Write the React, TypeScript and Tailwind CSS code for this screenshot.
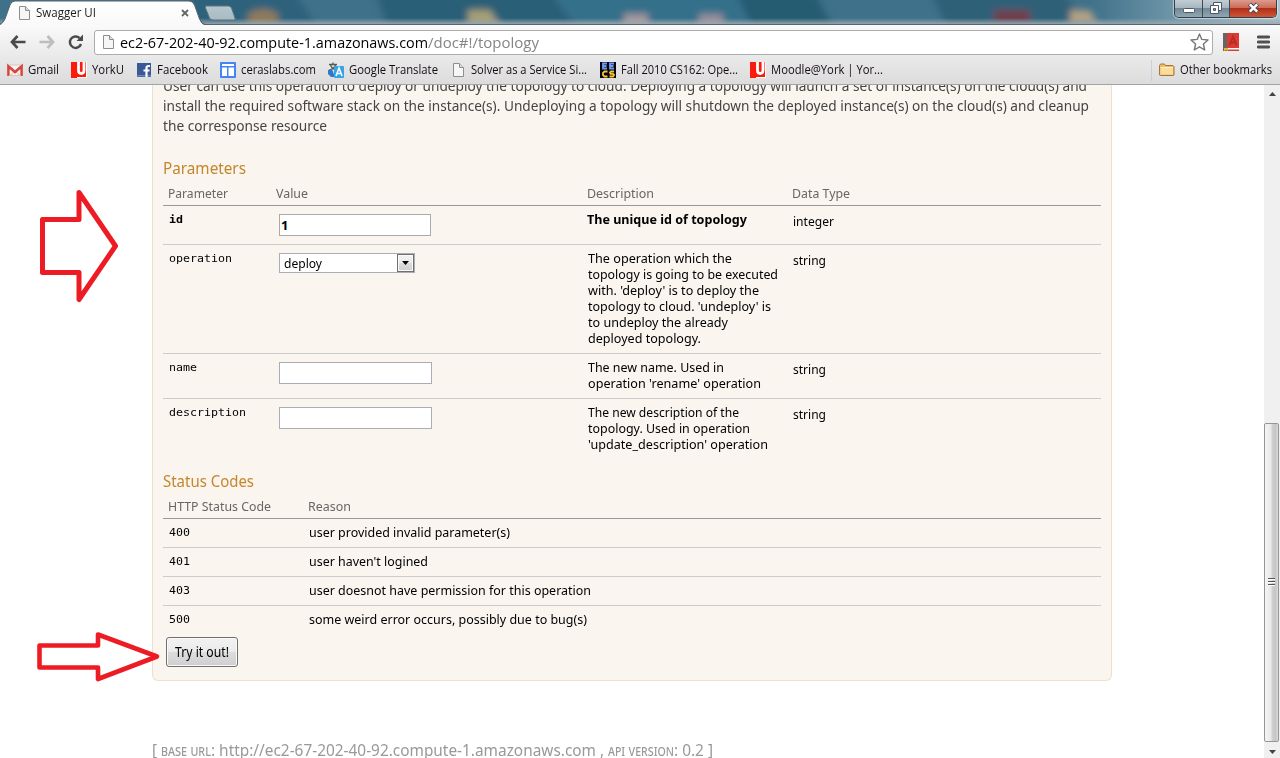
import { useLayoutEffect, useRef, useState } from 'react';
import type { ReactNode } from 'react';

/* One line of text, condensed or widened so that it fills a given width. */
function Line({ w, text, className = '' }: { w: number; text: string; className?: string }) {
  const ref = useRef<HTMLSpanElement>(null);
  const [natural, setNatural] = useState(w);
  useLayoutEffect(() => {
    const el = ref.current;
    if (!el) return;
    el.style.transform = 'none';
    const width = el.getBoundingClientRect().width;
    el.style.transform = `scaleX(${w / width})`;
    setNatural(width);
  }, [w, text]);
  return (
    <span className={`block shrink-0 whitespace-pre ${className}`} style={{ width: w }}>
      <span ref={ref} className="inline-block origin-left" style={{ transform: `scaleX(${w / natural})` }}>{text}</span>
    </span>
  );
}

const UI = "font-['Open_Sans',sans-serif]";
const MONO = "font-['DejaVu_Sans_Mono',monospace] text-[11px] leading-4";

function PageIcon() {
  return (
    <svg width="16" height="16" viewBox="0 0 16 16">
      <path d="M3.500 1.500h6l4 4v9h-10z" fill="#f6f6f6" stroke="#8e8e8e" />
      <path d="M9.500 1.500v4h4" fill="#ddd" stroke="#8e8e8e" />
    </svg>
  );
}

function GmailIcon() {
  return (
    <svg width="16" height="16" viewBox="0 0 16 16">
      <rect x="0" y="3" width="16" height="11" rx="1" fill="#fbf3f2" />
      <path d="M3 13.500l4.500-4M13 13.500l-4.500-4" stroke="#dcb5b1" />
      <path d="M2.500 3h11" stroke="#d8c8c6" />
      <path d="M1.400 14V4.200L8 10l6.600-5.800V14" fill="none" stroke="#d6453b" strokeWidth="2.500" />
      <path d="M2 13.600h12" stroke="#d9bdb9" />
    </svg>
  );
}

function YorkIcon() {
  return (
    <svg width="16" height="16" viewBox="0 0 16 16">
      <rect width="16" height="16" fill="#fb1b0d" />
      <path d="M7.500 0v8.500q0 3 2.700 3 2.800 0 2.800-3V0" fill="none" stroke="#fff" strokeWidth="2.800" />
      <path d="M15.500 0v16M6 15.500h10" stroke="#fff" />
    </svg>
  );
}

function FacebookIcon() {
  return (
    <svg width="16" height="16" viewBox="0 0 16 16">
      <rect x="1" y="1" width="14" height="14" fill="#3b5998" />
      <path d="M1 13h14v1.500H1z" fill="#6d84b4" />
      <path d="M14 4h-1.500q-2 0-2 2v9M7.500 8.500h6" fill="none" stroke="#fff" strokeWidth="2.200" />
    </svg>
  );
}

function SiteIcon() {
  return (
    <svg width="16" height="16" viewBox="0 0 16 16">
      <rect width="16" height="16" rx="1" fill="#4285f4" />
      <path d="M2 2h12v2H2zM2 5.500h5V14H2zM8.500 5.500H14V14H8.500z" fill="#fff" />
    </svg>
  );
}

function TranslateIcon() {
  return (
    <svg width="16" height="16" viewBox="0 0 16 16">
      <rect x="1" y="0" width="9" height="9" fill="#ece9e0" />
      <path d="M1 2.500h8M5 .5v2M2.500 3q1.500 4 6 5M7.500 3q-1 3.500-6 5" fill="none" stroke="#59594f" strokeWidth="1.300" />
      <path d="M0 8l4-1 3 8H3L0 12z" fill="#2f79c8" />
      <rect x="6" y="4" width="10" height="12" rx="1" fill="#36a4ea" />
      <path d="M8 14l3-8 3 8M9.300 11.500h3.500" fill="none" stroke="#fff" strokeWidth="1.500" />
    </svg>
  );
}

function EecsIcon() {
  return (
    <svg width="16" height="16" viewBox="0 0 16 16">
      <rect width="16" height="16" fill="#050510" />
      <path d="M7 1.500H3v5h4M3 4h3.500M14 1.500h-4v5h4M10 4h3.500" fill="none" stroke="#6f9cf2" strokeWidth="1.800" />
      <path d="M7.500 9.500h-3L3 10.800v2.400l1.500 1.300h3M14 9.500h-3l-1 1 .5 1.300h2.500l1 1-1 1.700h-3.500" fill="none" stroke="#f4c62c" strokeWidth="1.800" />
    </svg>
  );
}

function FolderIcon() {
  return (
    <svg width="16" height="16" viewBox="0 0 16 16">
      <path d="M.5 13V3.500l1-1.500h4l1 1.500h7.500l1 1V13l-1 .500H1.500z" fill="#eebc62" stroke="#a5743a" />
      <path d="M1.500 6h12.500v6.500H1.500z" fill="#fcdc9a" />
      <path d="M1.500 5.500h12.500" stroke="#fff0c9" />
    </svg>
  );
}

const bookmarks: { icon: ReactNode; text: string; w: number; cell: string }[] = [
  { icon: <GmailIcon />, text: 'Gmail', w: 31, cell: 'w-[64px]' },
  { icon: <YorkIcon />, text: 'YorkU', w: 32, cell: 'w-[65px]' },
  { icon: <FacebookIcon />, text: 'Facebook', w: 51, cell: 'w-[84px]' },
  { icon: <SiteIcon />, text: 'ceraslabs.com', w: 75, cell: 'w-[108px]' },
  { icon: <TranslateIcon />, text: 'Google Translate', w: 89, cell: 'w-[122px]' },
  { icon: <PageIcon />, text: 'Solver as a Service Si...', w: 116, cell: 'w-[150px]' },
  { icon: <EecsIcon />, text: 'Fall 2010 CS162: Ope...', w: 117, cell: 'w-[150px]' },
  { icon: <YorkIcon />, text: 'Moodle@York | Yor...', w: 112, cell: 'w-[140px]' },
];

function TitleBar() {
  return (
    <header className="relative flex h-[25px] shrink-0 items-start justify-between overflow-hidden bg-[#37708a]">
      <svg className="absolute inset-0" width="1280" height="25" viewBox="0 0 1280 25">
        <defs>
          <filter id="soft" x="-20%" y="-60%" width="140%" height="220%"><feGaussianBlur stdDeviation="3.500" /></filter>
          <linearGradient id="edge" x1="0" y1="0" x2="0" y2="1">
            <stop offset="0" stopColor="#9aa9b0" stopOpacity="0" />
            <stop offset="1" stopColor="#9aa9b0" stopOpacity=".9" />
          </linearGradient>
          <linearGradient id="side"><stop offset="0" stopColor="#b9ccd5" stopOpacity="0" /><stop offset="1" stopColor="#b9ccd5" stopOpacity=".9" /></linearGradient>
          <linearGradient id="tabfill" x1="0" y1="0" x2="0" y2="1"><stop offset="0" stopColor="#fff" /><stop offset="1" stopColor="#f9f9f9" /></linearGradient>
          <linearGradient id="newtab" x1="0" y1="0" x2="0" y2="1"><stop offset="0" stopColor="#b6c6cf" /><stop offset="1" stopColor="#a9bac4" /></linearGradient>
        </defs>
        <rect width="1280" height="25" fill="#3f718a" />
        <g filter="url(#soft)">
          <path d="M190-8h105l25 40H190z" fill="#2d627b" />
          <path d="M375-8h175l30 40H390z" fill="#2a5e78" />
          <path d="M550-8h190l20 40H580z" fill="#35708a" />
          <path d="M735-8h80l20 40h-80z" fill="#275c72" />
          <path d="M930-8h130l40 40H950z" fill="#2d6078" />
          <ellipse cx="263" cy="18" rx="16" ry="9" fill="#8f7a5c" />
          <path d="M468 10h22l10 15h-32z" fill="#a6a077" />
          <rect x="624" y="14" width="24" height="14" fill="#a7989f" />
          <rect x="699" y="14" width="24" height="14" fill="#9a909b" />
          <rect x="994" y="10" width="36" height="13" fill="#723e49" />
          <path d="M1070 10h20l8 14h-28z" fill="#b3a184" />
        </g>
        <rect x="1090" width="190" height="25" fill="url(#side)" />
        <rect y="18" width="1280" height="6" fill="url(#edge)" />
        <path d="M0 24.500h1280" stroke="#5a666d" />
        <path d="M205.500 8q-1-2 1-2h22q2 0 3 2l3.500 10q1 2-1.500 2h-20q-3 0-4-2z" fill="url(#newtab)" stroke="#5b7480" />
        <path d="M0 25q3-1 5-6l5-14q1.500-4 5-4h174q4 0 5.500 4l5 14q2 6 6 6z" fill="url(#tabfill)" />
        <path d="M0 24q3-1 5-5l5-14q1.500-4 5-4h174q4 0 5.500 4l5 14q2 5.500 6 5.500" fill="none" stroke="#56646c" />
      </svg>
      <div className="relative flex h-[25px] items-center pl-4">
        <PageIcon />
        <Line w={60} text="Swagger UI" className={`${UI} ml-1 text-[12px] leading-4 text-[#1d1d1d]`} />
        <svg className="ml-[85px]" width="8" height="8" viewBox="0 0 8 8"><path d="M1 1l6 6M7 1L1 7" stroke="#666" strokeWidth="1.800" /></svg>
      </div>
      <div className="relative mr-[3px] flex h-[18px] w-[103px] overflow-hidden rounded-b-[5px] border border-t-0 border-[#333f4a] shadow-[0_0_1px_1px_rgba(255,255,255,0.5)]">
        <div className="flex w-[28px] items-end justify-center border-r border-[#3c4a54] bg-[linear-gradient(#c2cdd4_0%,#a5b5bf_48%,#718997_50%,#91a7b2_100%)] pb-[4px]">
          <svg width="12" height="5" viewBox="0 0 12 5"><rect x=".5" y=".5" width="11" height="4" rx="1" fill="#fff" stroke="#4d5967" /></svg>
        </div>
        <div className="flex w-[27px] items-start justify-center border-r border-[#3c4a54] bg-[linear-gradient(#c2cdd4_0%,#a5b5bf_48%,#718997_50%,#91a7b2_100%)] pt-[2px]">
          <svg width="12" height="12" viewBox="0 0 12 12">
            <path d="M3.500.5h8v8h-8z" fill="#fff" stroke="#4d5967" />
            <path d="M.5 3.500h8v8h-8z" fill="#fff" stroke="#4d5967" />
            <path d="M3.500 6.500h2v2h-2z" fill="#8ea1ad" stroke="#4d5967" />
          </svg>
        </div>
        <div className="flex flex-1 items-start justify-center bg-[linear-gradient(#dc9c8e_0%,#cd6a55_46%,#b0301b_50%,#cf5537_100%)] pt-[2px]">
          <svg width="13" height="12" viewBox="0 0 13 12">
            <path d="M2.500 2l8 8M10.500 2l-8 8" stroke="#4a4b5d" strokeWidth="4.400" />
            <path d="M2.800 2.300l7.400 7.400M10.200 2.300L2.800 9.700" stroke="#fff" strokeWidth="2.500" />
          </svg>
        </div>
      </div>
    </header>
  );
}

function Toolbar() {
  return (
    <div className="h-[60px] shrink-0 border-b border-[#a3a3a3] bg-[linear-gradient(#fafafa_0px,#ebebeb_28px,#dcdcdc_59px)]">
      <div className="flex h-[34px] items-center">
        <svg className="ml-[10px]" width="16" height="14" viewBox="0 0 16 14"><path d="M7.500 1L2 7l5.500 6M2.500 7H15.500" fill="none" stroke="#4a4a4a" strokeWidth="2.700" /></svg>
        <svg className="ml-[13px]" width="16" height="14" viewBox="0 0 16 14"><path d="M8.500 1L14 7l-5.500 6M13.500 7H.5" fill="none" stroke="#bdbdbd" strokeWidth="2.700" /></svg>
        <svg className="ml-[12px]" width="17" height="16" viewBox="0 0 17 16">
          <path d="M12.500 4A5.700 5.700 0 1 0 14 10" fill="none" stroke="#4a4a4a" strokeWidth="2.500" />
          <path d="M16 .5V7H9.500z" fill="#4a4a4a" />
        </svg>
        <div className="ml-[10px] flex h-[25px] w-[1119px] items-center rounded-[3px] border border-[#acacac] bg-white">
          <div className="ml-[5px]"><PageIcon /></div>
          <Line w={308} text="ec2-67-202-40-92.compute-1.amazonaws.com" className={`${UI} ml-[4px] text-[15px] leading-5 text-black`} />
          <Line w={111} text="/doc#!/topology" className={`${UI} text-[15px] leading-5 text-[#858585]`} />
          <svg className="mr-[3px] ml-auto" width="19" height="18" viewBox="0 0 19 18"><path d="M9.500 1l2.300 5.400 6.200.6-4.600 4 1.300 6-5.200-3.200L4.300 17l1.300-6L1 7l6.200-.6z" fill="#fff" stroke="#777" strokeWidth="1.400" strokeLinejoin="round" /></svg>
        </div>
        <svg className="ml-[10px]" width="16" height="18" viewBox="0 0 16 18">
          <path d="M0 0h16v18H3l-3-2z" fill="#dc3b32" />
          <path d="M0 0h4v18H0z" fill="#666" />
          <path d="M4 15h12v1.500H4z" fill="#fff" />
          <path d="M1 15h4v3l-2-1-2 1z" fill="#efb52b" />
          <path d="M6.500 12.500l3.500-9 3.500 9M7.500 9.500h5" fill="none" stroke="#b62c28" strokeWidth="1.800" />
        </svg>
        <svg className="ml-[18px]" width="13" height="14" viewBox="0 0 13 14"><path d="M1.300 2h10.400M1.300 7h10.400M1.300 12h10.400" stroke="#505050" strokeWidth="2.800" strokeLinecap="round" /></svg>
      </div>
      <div className={`${UI} flex h-[22px] items-center pl-[7px] text-[12px] leading-4 text-[#160b16]`}>
        {bookmarks.map((b, i) => (
          <div key={i} className={`${b.cell} flex shrink-0 items-center gap-[5px]`}>
            {b.icon}
            <Line w={b.w} text={b.text} />
          </div>
        ))}
        <div className="mr-[8px] ml-auto flex h-[21px] items-center gap-[5px] border-l border-[#c8d0d8] pl-[7px]">
          <FolderIcon />
          <Line w={92} text="Other bookmarks" />
        </div>
      </div>
    </div>
  );
}

const GRID = 'grid grid-cols-[108px_311px_205px_314px]';

function Param({ name, nameW, value, lines, type, typeW, cls, bold = false }: {
  name: string; nameW: number; value: ReactNode; lines: [string, number][]; type: string; typeW: number; cls: string; bold?: boolean;
}) {
  return (
    <div className={`${GRID} ${cls} border-[#ccc] text-[13px] leading-4`}>
      <div className="pt-[6px] pl-[6px]"><Line w={nameW} text={name} className={`${MONO} ${bold ? 'font-bold' : ''}`} /></div>
      <div className="pt-[8px] pl-[8px]">{value}</div>
      <div className={bold ? 'pt-[5px] pl-[5px] font-bold' : 'pt-[5px] pl-[6px]'}>
        {lines.map(([t, w]) => <Line key={t} text={t} w={w} />)}
      </div>
      <div className="pt-[7px] pl-[6px]"><Line w={typeW} text={type} /></div>
    </div>
  );
}

const codes: [string, string, number][] = [
  ['400', 'user provided invalid parameter(s)', 201],
  ['401', "user haven't logined", 119],
  ['403', 'user doesnot have permission for this operation', 282],
  ['500', 'some weird error occurs, possibly due to bug(s)', 278],
];

function Operation() {
  return (
    <section className="ml-[152px] w-[960px] rounded-b-[6px] border border-t-0 border-[#f0e0ca] bg-[#faf5ee] px-[10px] pb-[13px]">
      <div className="text-[14px] leading-5 text-[#444]">
        <Line w={924} text="User can use this operation to deploy or undeploy the topology to cloud. Deploying a topology will launch a set of instance(s) on the cloud(s) and" />
        <Line w={926} text="install the required software stack on the instance(s). Undeploying a topology will shutdown the deployed instance(s) on the cloud(s) and cleanup" />
        <Line w={164} text="the corresponse resource" />
      </div>
      <h4 className="mt-[22px] text-[16px] leading-5 text-[#c5862b]"><Line w={83} text="Parameters" /></h4>
      <div className={`${GRID} h-[28px] border-b border-[#999] pt-[7px] text-[13px] leading-4 text-[#666]`}>
        <Line w={60} text="Parameter" className="ml-[5px]" />
        <Line w={32} text="Value" className="ml-[5px]" />
        <Line w={67} text="Description" className="ml-[5px]" />
        <Line w={58} text="Data Type" className="ml-[5px]" />
      </div>
      <Param
        bold name="id" nameW={14} type="integer" typeW={41} cls="h-[39px] border-b"
        lines={[['The unique id of topology', 160]]}
        value={<div className="flex h-[22px] w-[152px] items-center border border-[#aaa] bg-white pl-px font-bold">1</div>}
      />
      <Param
        name="operation" nameW={63} type="string" typeW={33} cls="h-[109px] border-b"
        lines={[
          ['The operation which the', 144], ['topology is going to be executed', 190], ["with. 'deploy' is to deploy the", 171],
          ["topology to cloud. 'undeploy' is", 183], ['to undeploy the already', 140], ['deployed topology.', 113],
        ]}
        value={
          <div className="flex h-[20px] w-[136px] items-center justify-between border border-[#aaadb5] bg-white pl-[4px]">
            <Line w={38} text="deploy" />
            <div className="flex h-[18px] w-[17px] items-center justify-center border border-[#707070] bg-[linear-gradient(#f2f2f2_0%,#ebebeb_48%,#dddddd_50%,#cfcfcf_100%)] shadow-[inset_0_0_0_1px_#fafafa]">
              <svg width="7" height="4" viewBox="0 0 7 4"><path d="M0 0h7L3.500 4z" fill="#000" /></svg>
            </div>
          </div>
        }
      />
      <Param
        name="name" nameW={28} type="string" typeW={33} cls="h-[45px] border-b"
        lines={[['The new name. Used in', 136], ["operation 'rename' operation", 173]]}
        value={<div className="h-[22px] w-[153px] border border-[#aaadb5] bg-white" />}
      />
      <Param
        name="description" nameW={77} type="string" typeW={33} cls="h-[72px]"
        lines={[['The new description of the', 151], ['topology. Used in operation', 162], ["'update_description' operation", 180]]}
        value={<div className="h-[22px] w-[153px] border border-[#aaadb5] bg-white" />}
      />
      <h4 className="text-[16px] leading-5 text-[#c5862b]"><Line w={91} text="Status Codes" /></h4>
      <div className="grid h-[28px] grid-cols-[140px_1fr] border-b border-[#999] pt-[7px] pl-[5px] text-[13px] leading-4 text-[#666]">
        <Line w={103} text="HTTP Status Code" />
        <Line w={43} text="Reason" />
      </div>
      {codes.map(([code, reason, w]) => (
        <div key={code} className="grid h-[29px] grid-cols-[140px_1fr] border-b border-[#ccc] pt-[5px] pl-[6px] text-[13px] leading-4 last-of-type:border-b-0">
          <Line w={21} text={code} className={`${MONO} pt-px`} />
          <Line w={w} text={reason} />
        </div>
      ))}
      <button className="mt-[2px] ml-[3px] flex h-[30px] w-[72px] items-center justify-center rounded-[3px] border border-[#707070] bg-[linear-gradient(#f2f2f2_0%,#ebebeb_48%,#dddddd_50%,#cfcfcf_100%)] text-[14px] leading-4 shadow-[inset_0_0_0_1px_#fafafa]">
        <Line w={54} text="Try it out!" />
      </button>
    </section>
  );
}

function Scrollbar() {
  return (
    <aside className="flex w-[16px] shrink-0 flex-col items-center bg-[#f0f0f0]">
      <div className="flex h-[17px] items-center"><svg width="7" height="4" viewBox="0 0 7 4"><path d="M0 4h7L3.500 0z" fill="#444" /></svg></div>
      <div className="mt-[321px] flex h-[319px] w-[15px] items-center justify-center self-start rounded-[2px] border border-[#959595] bg-[linear-gradient(90deg,#f5f5f5_0%,#e8e8ea_48%,#d2d2d5_52%,#c5c5c8_80%,#dcdcdc_100%)]">
        <svg width="7" height="9" viewBox="0 0 7 9"><path d="M0 1.500h7M0 4.500h7M0 7.500h7" stroke="#fff" /><path d="M0 .5h7M0 3.500h7M0 6.500h7" stroke="#555" /></svg>
      </div>
      <div className="flex h-[16px] items-center pt-1"><svg width="7" height="4" viewBox="0 0 7 4"><path d="M0 0h7L3.500 4z" fill="#444" /></svg></div>
    </aside>
  );
}

export default function App() {
  return (
    <div className="relative flex h-[758px] w-[1280px] flex-col overflow-hidden bg-white font-['Noto_Sans',sans-serif] text-black">
      <TitleBar />
      <Toolbar />
      <div className="flex min-h-0 flex-1">
        <main className="min-w-0 flex-1 overflow-hidden">
          <div className="-mt-[9px]">
            <Operation />
            <footer className="mt-[59px] ml-[152px] flex text-[16px] leading-5 text-[#999]">
              <Line w={9} text="[ " />
              <Line w={50} text="base url" className="[font-variant:small-caps]" />
              <Line w={389} text=": http://ec2-67-202-40-92.compute-1.amazonaws.com " />
              <Line w={8} text=", " />
              <Line w={66} text="api version" className="[font-variant:small-caps]" />
              <Line w={39} text=": 0.2 ]" />
            </footer>
          </div>
        </main>
        <Scrollbar />
      </div>
      <svg className="pointer-events-none absolute top-0 left-0" width="170" height="758" viewBox="0 0 170 758">
        <g fill="none" stroke="#ed1c24" strokeWidth="5" strokeLinejoin="round">
          <path d="M42.500 219.500H79v-27L115.500 246 79 299.500v-27H42.500z" />
          <path strokeWidth="4.600" d="M39.500 645.500H98v-11l59 22-59 22.500v-11.500H39.500z" />
        </g>
      </svg>
    </div>
  );
}
